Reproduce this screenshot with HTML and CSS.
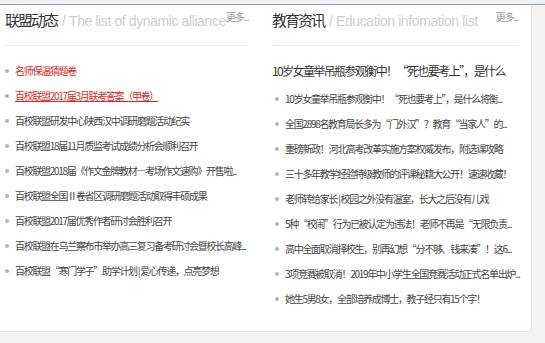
FILE: index.html
```html
<!DOCTYPE html>
<html lang="zh-CN">
<head>
<meta charset="utf-8">
<title>联盟动态</title>
<link rel="stylesheet" href="styles.css">
</head>
<body>
<div class="topbar"></div>
<div class="panel">
    <div class="box">
        <div class="box-hd">
            <h2>联盟动态<span>/ The list of dynamic alliance</span></h2>
            <a class="more" href="javascript:void(0);">更多...</a>
        </div>
        <ul class="news">
            <li class="hot"><a href="javascript:void(0);">名师保温猜题卷</a></li>
            <li class="hot on"><a href="javascript:void(0);">百校联盟2017届3月联考答案（甲卷）</a></li>
            <li><a href="javascript:void(0);">百校联盟研发中心陕西汉中调研磨题活动纪实</a></li>
            <li><a href="javascript:void(0);">百校联盟18届11月质监考试成绩分析会顺利召开</a></li>
            <li><a href="javascript:void(0);">百校联盟2018届《作文金牌教材—考场作文速购》开售啦...</a></li>
            <li><a href="javascript:void(0);">百校联盟全国Ⅱ卷省区调研磨题活动取得丰硕成果</a></li>
            <li><a href="javascript:void(0);">百校联盟2017届优秀作者研讨会胜利召开</a></li>
            <li><a href="javascript:void(0);">百校联盟在乌兰察布市举办高三复习备考研讨会暨校长高峰...</a></li>
            <li><a href="javascript:void(0);">百校联盟“寒门学子”助学计划 | 爱心传递，点亮梦想</a></li>
        </ul>
    </div>
    <div class="box">
        <div class="box-hd">
            <h2>教育资讯<span>/ Education infomation list</span></h2>
            <a class="more" href="javascript:void(0);">更多...</a>
        </div>
        <p class="headline">10岁女童举吊瓶参观衡中！“死也要考上”，是什么</p>
        <ul class="news">
            <li><a href="javascript:void(0);">10岁女童举吊瓶参观衡中！“死也要考上”，是什么将衡...</a></li>
            <li><a href="javascript:void(0);">全国2898名教育局长多为“门外汉”？教育“当家人”的...</a></li>
            <li><a href="javascript:void(0);">重磅新政！河北高考改革实施方案权威发布，附选课攻略</a></li>
            <li><a href="javascript:void(0);">三十多年教学经验特级教师的评课秘籍大公开！速速收藏！</a></li>
            <li><a href="javascript:void(0);">老师转给家长 | 校园之外没有温室，长大之后没有儿戏</a></li>
            <li><a href="javascript:void(0);">5种“校闹”行为已被认定为违法！老师不再是“无限负责...</a></li>
            <li><a href="javascript:void(0);">高中全面取消择校生，别再幻想“分不够、钱来凑”！这6...</a></li>
            <li><a href="javascript:void(0);">3项竞赛被取消！2019年中小学生全国竞赛活动正式名单出炉...</a></li>
            <li><a href="javascript:void(0);">她生5男8女，全部培养成博士，教子经只有15个字！</a></li>
        </ul>
    </div>
</div>
</body>
</html>
```

FILE: styles.css
```css
body {margin:0; background:#f4f3ef; color:#444; font:10px "Noto Sans CJK SC", sans-serif;}
a {color:#444; text-decoration:none;}
.topbar {height:4px; background:#eef0f2; border-bottom:1px solid #8b9fb5;}

.panel {
    display:grid;
    grid-template-columns:243px 246px;
    column-gap:24px;
    width:532px;
    box-sizing:border-box;
    padding:3px 13px 20px 5px;
    background:#fff;
    border-right:1px solid #e4e3df;
    border-bottom:1px solid #e4e3df;
    border-radius:0 0 4px 0;
}
.box {min-width:0;}

.box-hd {display:flex; justify-content:space-between; align-items:flex-start; padding-bottom:12px; border-bottom:1px dotted #dcdcdc;}
.box-hd h2 {margin:0; font-size:15px; line-height:24px; font-weight:normal; letter-spacing:-2px; color:#333; white-space:nowrap;}
.box-hd h2 span {margin-left:5px; font:14px/24px "Liberation Sans", Arial, sans-serif; letter-spacing:-0.4px; color:#cdcdcd;}
.box-hd .more {flex:none; font-size:10px; line-height:18px; letter-spacing:-1.2px; color:#999; white-space:nowrap;}

.headline {margin:12px 0 0; font-size:12px; line-height:25px; letter-spacing:-1.6px; color:#333; white-space:nowrap;}

.news {margin:12px 0 0; padding:0; list-style:none; letter-spacing:-1.3px;}
.headline + .news {margin-top:3px; padding-left:3px;}
.news li {display:flex; align-items:center; height:25px; white-space:nowrap;}
.news li::before {content:""; flex:none; width:4px; height:4px; margin-right:6px; border-radius:50%; background:#b3b3b3;}
.news .hot a {color:#d42a2a;}
.news .on a {text-decoration:underline;}
```
